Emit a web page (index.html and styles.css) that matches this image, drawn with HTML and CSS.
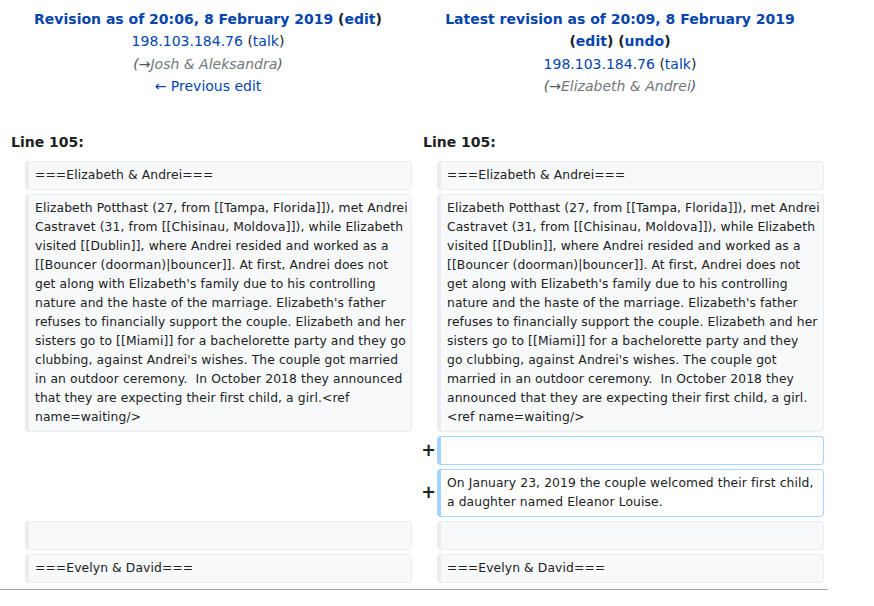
FILE: index.html
```html
<!DOCTYPE html>
<html lang="en">
<head>
<meta charset="utf-8">
<title>Diff</title>
<link rel="stylesheet" href="styles.css">
</head>
<body>
<table class="diff">
  <colgroup>
    <col class="c-marker">
    <col class="c-text">
    <col class="c-marker">
    <col class="c-text">
  </colgroup>
  <tr>
    <td colspan="2" class="title">
      <div><strong><a href="#">Revision as of 20:06, 8 February 2019</a> (<a href="#">edit</a>)</strong></div>
      <div><a href="#">198.103.184.76</a> (<a href="#">talk</a>)</div>
      <div class="comment"><span class="cp">(→</span>Josh &amp; Aleksandra<span class="cp">)</span></div>
      <div><a href="#">← Previous edit</a></div>
    </td>
    <td colspan="2" class="title">
      <div><strong><a href="#">Latest revision as of 20:09, 8 February 2019</a><br>(<a href="#">edit</a>) (<a href="#">undo</a>)</strong></div>
      <div><a href="#">198.103.184.76</a> (<a href="#">talk</a>)</div>
      <div class="comment"><span class="cp">(→</span>Elizabeth &amp; Andrei<span class="cp">)</span></div>
    </td>
  </tr>
  <tr class="spacer"><td colspan="4"></td></tr>
  <tr>
    <td colspan="2" class="lineno">Line 105:</td>
    <td colspan="2" class="lineno">Line 105:</td>
  </tr>
  <tr>
    <td class="marker"></td>
    <td class="line ctx"><div>===Elizabeth &amp; Andrei===</div></td>
    <td class="marker"></td>
    <td class="line ctx"><div>===Elizabeth &amp; Andrei===</div></td>
  </tr>
  <tr>
    <td class="marker"></td>
    <td class="line ctx"><div>Elizabeth Potthast (27, from [[Tampa, Florida]]), met Andrei Castravet (31, from [[Chisinau, Moldova]]), while Elizabeth visited [[Dublin]], where Andrei resided and worked as a [[Bouncer (doorman)|bouncer]]. At first, Andrei does not get along with Elizabeth's family due to his controlling nature and the haste of the marriage. Elizabeth's father refuses to financially support the couple. Elizabeth and her sisters go to [[Miami]] for a bachelorette party and they go clubbing, against Andrei's wishes. The couple got married in an outdoor ceremony.  In October 2018 they announced that they are expecting their first child, a girl.&lt;ref name=waiting/&gt;</div></td>
    <td class="marker"></td>
    <td class="line ctx"><div>Elizabeth Potthast (27, from [[Tampa, Florida]]), met Andrei Castravet (31, from [[Chisinau, Moldova]]), while Elizabeth visited [[Dublin]], where Andrei resided and worked as a [[Bouncer (doorman)|bouncer]]. At first, Andrei does not get along with Elizabeth's family due to his controlling nature and the haste of the marriage. Elizabeth's father refuses to financially support the couple. Elizabeth and her sisters go to [[Miami]] for a bachelorette party and they
go clubbing, against Andrei's wishes. The couple got married in an outdoor ceremony.  In October 2018 they announced that they are expecting their first child, a girl.
&lt;ref name=waiting/&gt;</div></td>
  </tr>
  <tr>
    <td colspan="2" class="empty"></td>
    <td class="marker"><span class="plus">+</span></td>
    <td class="line add"><div><br></div></td>
  </tr>
  <tr>
    <td colspan="2" class="empty"></td>
    <td class="marker"><span class="plus">+</span></td>
    <td class="line add"><div>On January 23, 2019 the couple welcomed their first child, a daughter named Eleanor Louise.</div></td>
  </tr>
  <tr>
    <td class="marker"></td>
    <td class="line ctx"><div><br></div></td>
    <td class="marker"></td>
    <td class="line ctx"><div><br></div></td>
  </tr>
  <tr>
    <td class="marker"></td>
    <td class="line ctx"><div>===Evelyn &amp; David===</div></td>
    <td class="marker"></td>
    <td class="line ctx"><div>===Evelyn &amp; David===</div></td>
  </tr>
</table>
<div class="rule"></div>
</body>
</html>
```

FILE: styles.css
```css
html, body {
  margin: 0;
  padding: 0;
  background: #ffffff;
}

body {
  font-family: "DejaVu Sans", sans-serif;
  font-size: 14px;
  color: #202122;
}

a {
  color: #0645ad;
  text-decoration: none;
}

.diff {
  width: 828px;
  table-layout: fixed;
  border-collapse: separate;
  border-spacing: 4px;
}

.c-marker { width: 17px; }
.c-text { width: 387px; }

.diff td {
  padding: 0;
  vertical-align: top;
}

.diff td.title {
  text-align: center;
  padding: 4px 7px 3px;
  line-height: 22.4px;
}

.comment {
  color: #72777d;
  font-style: italic;
}

.comment .cp {
  color: #54595d;
}

.spacer td {
  height: 17px;
}

.diff td.lineno {
  font-weight: bold;
  text-align: left;
  padding: 5px 7px 4px;
  line-height: 22.4px;
}

.diff td.line {
  font-size: 12.32px;
  letter-spacing: 0.11px;
  line-height: 19px;
  padding: 4px 3px 4px 6px;
  border-style: solid;
  border-width: 1px 1px 1px 4px;
  border-radius: 4px;
  white-space: pre-wrap;
  overflow-wrap: break-word;
}

.diff td.ctx {
  background: #f8f9fa;
  border-color: #eaecf0;
}

.diff td.add {
  background: #ffffff;
  border-color: #a3d3ff;
}

.diff td.marker {
  text-align: right;
  vertical-align: middle;
  font-weight: bold;
  font-size: 17.5px;
  line-height: 1;
}

.plus {
  display: inline-block;
  margin-right: -3px;
}

.rule {
  width: 828px;
  margin-top: 2px;
  border-top: 1px solid #a2a9b1;
}
```
